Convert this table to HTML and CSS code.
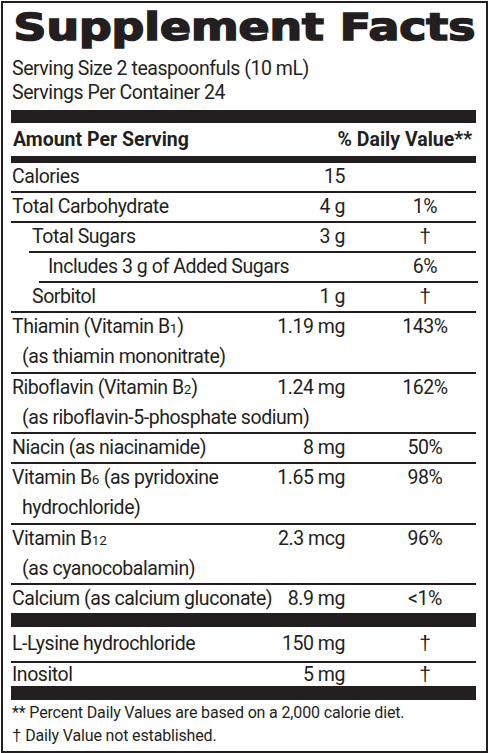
FILE: index.html
```html
<!DOCTYPE html>
<html>
<head>
<meta charset="utf-8">
<link rel="stylesheet" href="styles.css">
</head>
<body>
<div class="label">
  <div class="title-wrap"><h1 class="title">Supplement Facts</h1></div>
  <div class="serving">Serving Size 2 teaspoonfuls (10 mL)</div>
  <div class="serving">Servings Per Container 24</div>
  <div class="bar bar-thick"></div>
  <div class="head-row">
    <span>Amount Per Serving</span>
    <span class="head-dv">% Daily Value**</span>
  </div>
  <div class="bar bar-mid"></div>

  <div class="row ruled">
    <span class="name">Calories</span><span class="amt">15</span><span class="dv"></span>
  </div>
  <div class="row ruled">
    <span class="name">Total Carbohydrate</span><span class="amt">4 g</span><span class="dv">1%</span>
  </div>
  <div class="row ruled indent1">
    <span class="name">Total Sugars</span><span class="amt">3 g</span><span class="dv"><span class="dag">†</span></span>
  </div>
  <div class="row ruled indent2">
    <span class="name">Includes 3 g of Added Sugars</span><span class="amt"></span><span class="dv">6%</span>
  </div>
  <div class="row ruled">
    <span class="name pad-in">Sorbitol</span><span class="amt">1 g</span><span class="dv"><span class="dag">†</span></span>
  </div>
  <div class="item ruled">
    <div class="row"><span class="name">Thiamin (Vitamin B<span class="sub">1</span>)</span><span class="amt">1.19 mg</span><span class="dv">143%</span></div>
    <div class="subline">(as thiamin mononitrate)</div>
  </div>
  <div class="item ruled">
    <div class="row"><span class="name">Riboflavin (Vitamin B<span class="sub">2</span>)</span><span class="amt">1.24 mg</span><span class="dv">162%</span></div>
    <div class="subline">(as riboflavin-5-phosphate sodium)</div>
  </div>
  <div class="row ruled">
    <span class="name">Niacin (as niacinamide)</span><span class="amt">8 mg</span><span class="dv">50%</span>
  </div>
  <div class="item ruled">
    <div class="row"><span class="name">Vitamin B<span class="sub">6</span> (as pyridoxine</span><span class="amt">1.65 mg</span><span class="dv">98%</span></div>
    <div class="subline">hydrochloride)</div>
  </div>
  <div class="item ruled">
    <div class="row"><span class="name">Vitamin B<span class="sub">12</span></span><span class="amt">2.3 mcg</span><span class="dv">96%</span></div>
    <div class="subline">(as cyanocobalamin)</div>
  </div>
  <div class="row">
    <span class="name">Calcium (as calcium gluconate)</span><span class="amt">8.9 mg</span><span class="dv">&lt;1%</span>
  </div>
  <div class="bar bar-thick2"></div>
  <div class="row ruled row-tall">
    <span class="name">L-Lysine hydrochloride</span><span class="amt">150 mg</span><span class="dv"><span class="dag">†</span></span>
  </div>
  <div class="row row-short">
    <span class="name">Inositol</span><span class="amt">5 mg</span><span class="dv"><span class="dag">†</span></span>
  </div>
  <div class="bar bar-thick2"></div>
  <div class="foot">
    <div>** Percent Daily Values are based on a 2,000 calorie diet.</div>
    <div><span class="foot-dag">†</span> Daily Value not established.</div>
  </div>
</div>
</body>
</html>
```

FILE: styles.css
```css
* { box-sizing: border-box; }

html, body {
  margin: 0;
  padding: 0;
  background: #ffffff;
}

body {
  font-family: Roboto, "Liberation Sans", Arial, sans-serif;
  color: #231f20;
}

.label {
  margin: 1px 0 0 1px;
  width: 487px;
  border: 2px solid #231f20;
  padding: 2px 10px 4px 8px;
}

.title-wrap {
  height: 40px;
  padding-top: 3px;
}

.title {
  margin: 0;
  display: inline-block;
  font-family: "DejaVu Sans", "Liberation Sans", sans-serif;
  font-weight: 700;
  font-size: 37px;
  line-height: 40px;
  white-space: nowrap;
  -webkit-text-stroke: 1.6px #231f20;
  transform: scaleX(1.235);
  transform-origin: left center;
  padding-left: 2px;
}

.serving {
  font-size: 19.5px;
  letter-spacing: -0.45px;
  line-height: 24px;
  padding-left: 1px;
}

.title-wrap + .serving { margin-top: 12px; }

.bar {
  background: #231f20;
}

.bar-thick {
  height: 13px;
  margin-top: 5px;
}

.bar-mid {
  height: 7px;
}

.bar-thick2 {
  height: 14px;
}

.head-row {
  display: flex;
  justify-content: space-between;
  font-weight: 700;
  font-size: 19.5px;
  line-height: 33px;
  padding: 0 4px 0 2px;
}

.row {
  display: flex;
  align-items: baseline;
  font-size: 19.5px;
  letter-spacing: -0.45px;
  line-height: 28px;
  white-space: nowrap;
}

.ruled {
  border-bottom: 2px solid #231f20;
}

.item > .row { border-bottom: 0; }

.name {
  flex: 1;
  min-width: 0;
  padding-left: 1px;
}

.amt {
  width: 75px;
  text-align: right;
}

.dv {
  width: 102px;
  margin-left: 29px;
  text-align: center;
}

.dag {
  font-family: "Liberation Sans", Arial, sans-serif;
  font-size: 21px;
  line-height: 10px;
  letter-spacing: 0;
}

.foot-dag {
  font-family: "Liberation Sans", Arial, sans-serif;
  font-size: 17px;
  line-height: 10px;
}

.indent1 { margin-left: 18px; }
.indent1 .name { padding-left: 3px; }

.indent2 { margin-left: 28px; margin-right: -2px; }
.indent2 .name { padding-left: 9px; }
.indent2 .dv { margin-right: 2px; }

.pad-in { padding-left: 21px; }

.sub {
  font-size: 13.5px;
  letter-spacing: 0;
}

.subline {
  font-size: 19.5px;
  letter-spacing: -0.45px;
  line-height: 29.5px;
  padding-left: 11px;
  white-space: nowrap;
}

.row-tall { line-height: 34px; }
.row-short { line-height: 23px; }

.foot {
  font-size: 16px;
  letter-spacing: -0.15px;
  line-height: 23px;
  padding-left: 1px;
  padding-top: 1px;
}
```
